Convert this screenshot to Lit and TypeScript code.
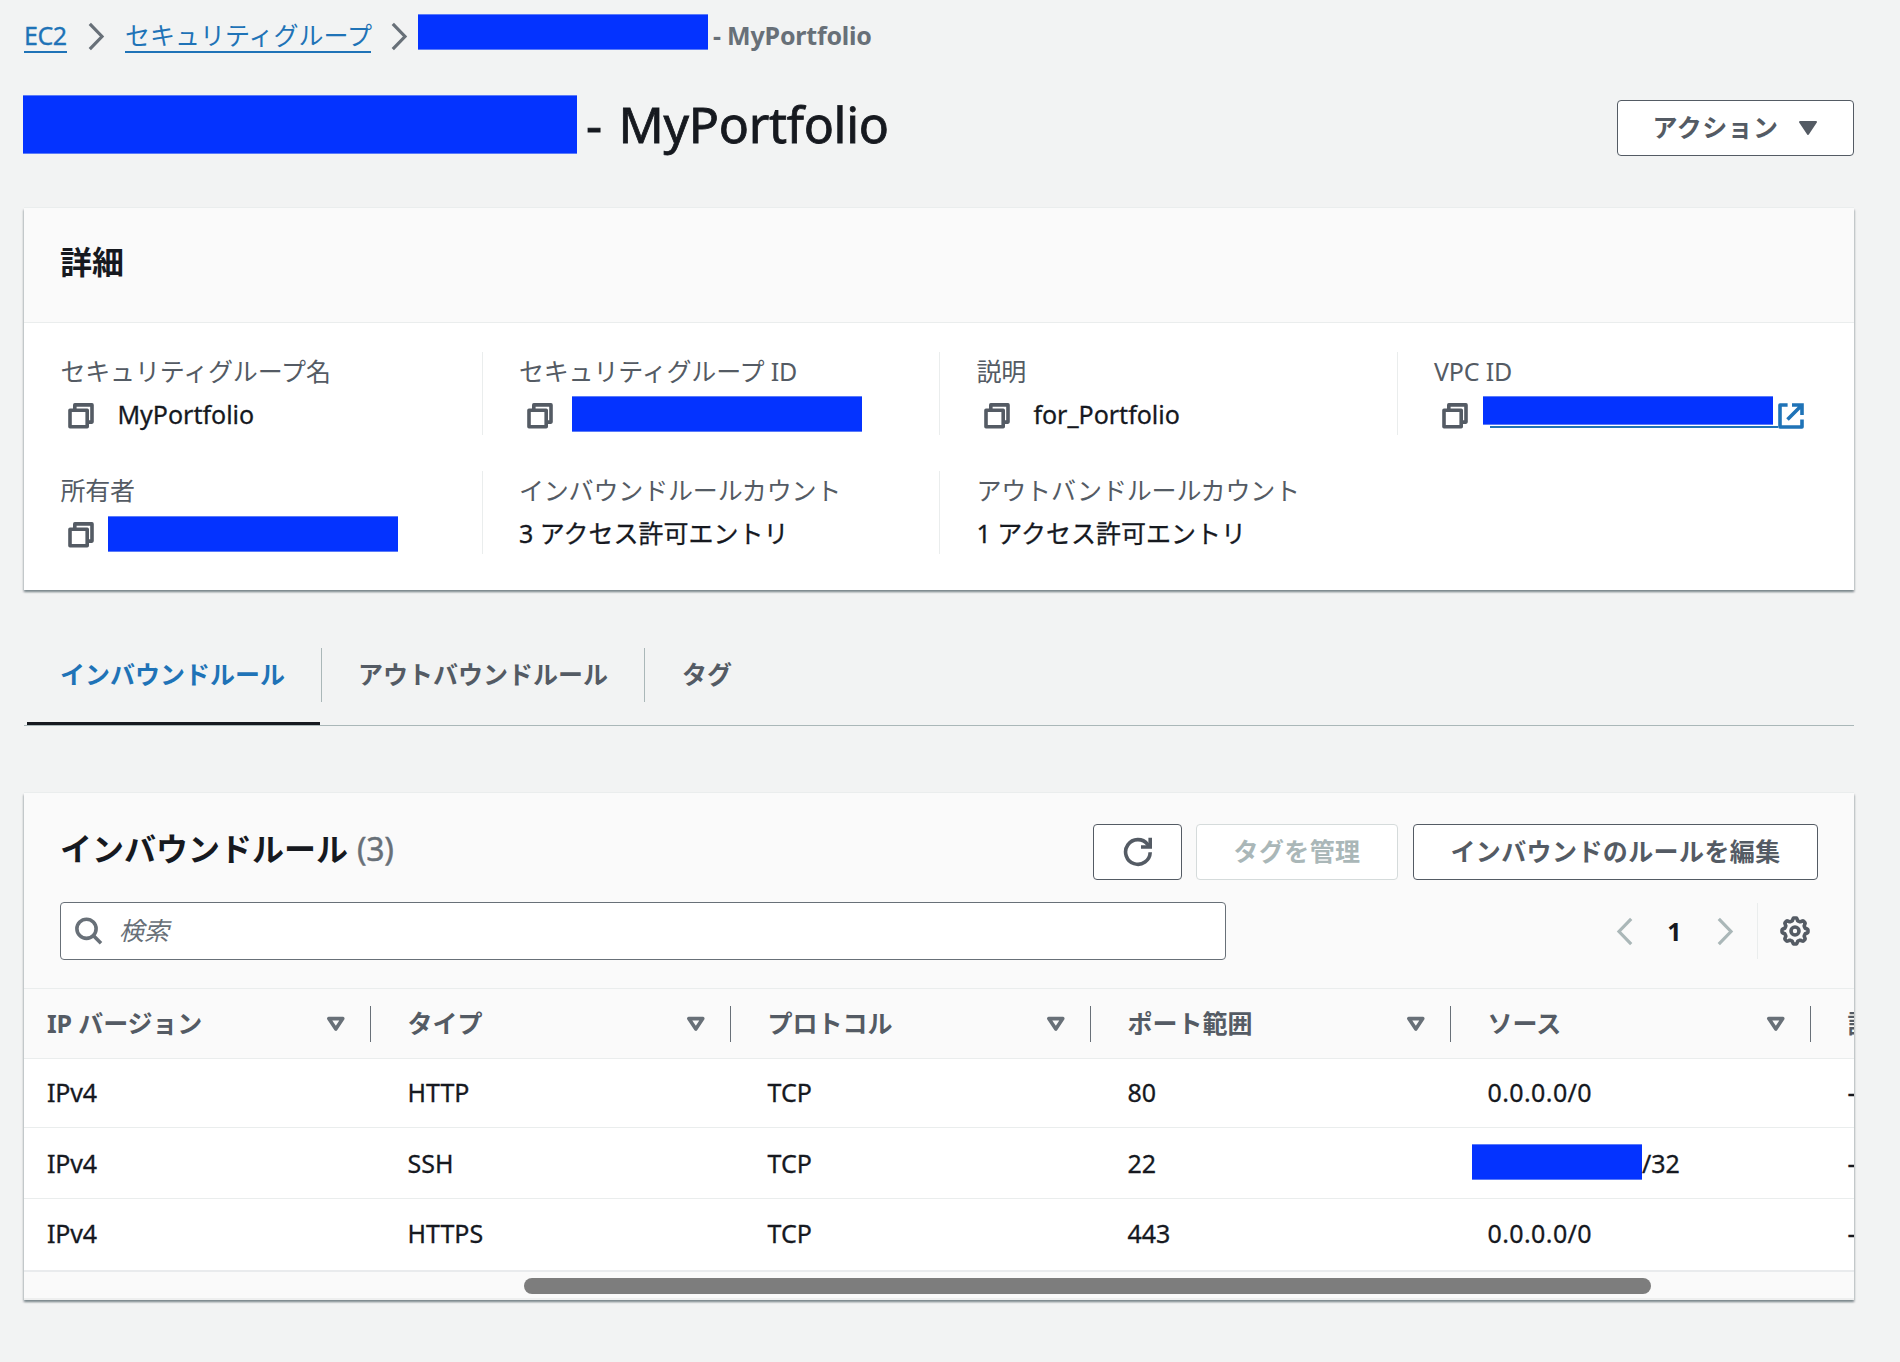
import { LitElement, html, css, svg, nothing, TemplateResult } from "lit";
import { customElement } from "lit/decorators.js";

const copyIcon = html`<svg class="copy" width="26" height="26" viewBox="0 0 26 26" fill="none" stroke="#545b64" stroke-width="3.6" stroke-linejoin="round">
  <path d="M6.8 6V1.9H24v17.2h-4.6" /><path d="M2 7.2h17.2v16.6H2z" />
</svg>`;

const externalIcon = html`<svg class="external" width="26" height="26" viewBox="0 0 26 26" fill="none" stroke="#1f73b7" stroke-width="3.6">
  <path d="M9.6 2H2v22h22v-7.6" stroke-linejoin="round" /><path d="M14 2h10v10M23.5 2.5L9.5 16.5" />
</svg>`;

const chevron = (dir: "left" | "right", color: string, cls: string) => html`<svg class=${cls} width="17" height="29" viewBox="0 0 17 29" fill="none" stroke=${color} stroke-width="3.2">
  ${dir === "right" ? svg`<path d="M1.8 1.8L14 14.5L1.8 27.2" />` : svg`<path d="M15.2 1.8L3 14.5L15.2 27.2" />`}
</svg>`;

const sortIcon = html`<svg class="sort" width="20" height="17" viewBox="0 0 20 17" fill="none" stroke="#687078" stroke-width="3.6" stroke-linejoin="round">
  <path d="M2.8 2.6h14L9.8 13z" />
</svg>`;

const gearPath = (() => {
  const steps = 96;
  let d = "";
  for (let i = 0; i < steps; i++) {
    const a = (i / steps) * Math.PI * 2;
    const wave = Math.max(-1, Math.min(1, 1.7 * Math.cos(a * 8)));
    const r = 11.7 + 1.3 * wave;
    d += `${i ? "L" : "M"}${(15 + r * Math.sin(a)).toFixed(2)} ${(15 - r * Math.cos(a)).toFixed(2)}`;
  }
  return d + "Z";
})();

interface Field {
  label: string;
  text?: string;
  copy?: boolean;
  mask?: string;
  link?: boolean;
}

const fields: Field[] = [
  { label: "セキュリティグループ名", text: "MyPortfolio", copy: true },
  { label: "セキュリティグループ ID", copy: true, mask: "mask-id" },
  { label: "説明", text: "for_Portfolio", copy: true },
  { label: "VPC ID", copy: true, link: true },
  { label: "所有者", copy: true, mask: "mask-owner" },
  { label: "インバウンドルールカウント", text: "3 アクセス許可エントリ" },
  { label: "アウトバンドルールカウント", text: "1 アクセス許可エントリ" },
];

const columns = ["IP バージョン", "タイプ", "プロトコル", "ポート範囲", "ソース", "説明"];

const masked = html`<span class="mask mask-ip"></span><span>/32</span>`;
const anyIp = html`<span class="ip">0.0.0.0/0</span>`;
const rows: (string | TemplateResult)[][] = [
  ["IPv4", "HTTP", "TCP", "80", anyIp, "–"],
  ["IPv4", "SSH", "TCP", "22", masked, "–"],
  ["IPv4", "HTTPS", "TCP", "443", anyIp, "–"],
];

@customElement("app-root")
export class AppRoot extends LitElement {
  static styles = css`
    :host {
      display: block;
      box-sizing: border-box;
      width: 1900px;
      height: 1362px;
      padding: 0 46px 0 24px;
      overflow: hidden;
      background: #f2f3f3;
      color: #16191f;
      font-family: "Noto Sans", "Noto Sans CJK JP", sans-serif;
      font-size: 25px;
      line-height: 40px;
    }
    * { box-sizing: border-box; }
    svg { display: block; flex: none; }
    .mask {
      display: block;
      flex: none;
      background: #0433ff;
      border: 1px solid #5b7bf8;
      border-width: 1px 0;
    }
    .crumbs { display: flex; align-items: flex-start; height: 95px; }
    .crumb {
      margin-top: 15px;
      height: 38px;
      border-bottom: 2px solid #1f73b7;
      color: #1f73b7;
      white-space: nowrap;
    }
    .crumb.first { width: 43px; letter-spacing: -0.5px; -webkit-text-stroke: 0.3px currentColor; }
    .crumb.second { width: 246px; }
    .sep { margin: 22px 20px 0 21px; }
    .sep.last { margin: 22px 10px 0 20px; }
    .mask-crumb { width: 290px; height: 36px; margin-top: 14px; }
    .current { margin: 15px 0 0 5px; color: #687078; font-weight: 700; white-space: nowrap; letter-spacing: -0.2px; }
    .heading { display: flex; align-items: flex-start; height: 113px; margin-left: -1px; }
    .mask-title { width: 554px; height: 59px; }
    h1, h2 { margin: 0; }
    h1 { margin: -1px 0 0 9px; font-size: 50px; line-height: 60px; font-weight: 400; white-space: nowrap; letter-spacing: -0.3px; word-spacing: 4px; -webkit-text-stroke: 0.8px currentColor; }
    .button {
      display: flex;
      align-items: center;
      justify-content: center;
      flex: none;
      height: 56px;
      padding-bottom: 2px;
      border: 1px solid #545b64;
      border-radius: 4px;
      background: #fff;
      color: #545b64;
      font-weight: 700;
      white-space: nowrap;
      letter-spacing: 0.4px;
    }
    .button.disabled { border-color: #d5dbdb; color: #aab7b8; }
    .button.icon { padding: 0; }
    .actions { width: 237px; margin: 5px 0 0 auto; gap: 20px; }
    .actions svg { margin-top: 1px; }
    .card {
      background: #fff;
      box-shadow: 0 -1px 0 #eaeded, 0 2px 2px rgba(0, 28, 36, 0.3), 1px 2px 2px rgba(0, 28, 36, 0.15), -1px 2px 2px rgba(0, 28, 36, 0.15);
    }
    .details { height: 382px; }
    .details-head { height: 115px; padding: 31px 36px; background: #fafafa; border-bottom: 1px solid #eaeded; }
    h2 { font-size: 32px; line-height: 46px; font-weight: 700; white-space: nowrap; }
    .fields { display: grid; grid-template-columns: repeat(4, 457.5px); grid-auto-rows: 83px; row-gap: 36px; padding-top: 29px; }
    .field { padding-left: 36.4px; border-left: 1px solid #eaeded; white-space: nowrap; }
    .field.first { border-left: none; }
    .label { height: 43px; margin-top: -1px; color: #545b64; letter-spacing: -0.15px; }
    .value { display: flex; height: 40px; }
    .text { -webkit-text-stroke: 0.3px currentColor; }
    .copy { margin: 9px 23px 0 8px; }
    .mask-id { width: 290px; height: 36px; margin-left: -4px; margin-top: 2px; }
    .mask-owner { width: 290px; height: 36px; margin-left: -9px; margin-top: 3px; }
    .vpc { display: flex; align-items: flex-start; margin-left: -8px; }
    .vpc-link { width: 295px; height: 33px; margin-top: 2px; background: linear-gradient(#1f73b7, #1f73b7) 7px 30px / 288px 2px no-repeat; }
    .mask-vpc { width: 290px; height: 29px; }
    .external { margin-top: 9px; }
    .tabs { display: flex; align-items: flex-start; height: 136px; margin-top: 58px; }
    .tab-strip { display: flex; flex: 1; height: 78px; border-bottom: 1px solid #aab7b8; font-weight: 700; color: #545b64; }
    .tab { height: 54px; padding: 6px 36px 0; border-right: 1px solid #aab7b8; white-space: nowrap; }
    .tab.active { width: 298px; color: #1f73b7; position: relative; }
    .tab.active::after { content: ""; position: absolute; left: 3px; top: 74px; width: 293px; height: 3px; background: #16191f; }
    .tab.middle { width: 323px; }
    .tab.last { border: none; padding-left: 37px; }
    .rules { height: 507px; margin-top: 9px; }
    .rules-head { height: 196px; background: #fafafa; border-bottom: 1px solid #eaeded; padding: 31px 36px 0; }
    .title-row { display: flex; height: 78px; }
    .title-row h2 { flex: 1; margin: 2px 0 0; }
    .count { font-weight: 400; color: #687078; margin-left: 9px; letter-spacing: -0.3px; -webkit-text-stroke: 0.4px currentColor; }
    .refresh { width: 89px; margin-right: 14px; }
    .manage { width: 202px; margin-right: 15px; }
    .edit { width: 405px; }
    .tools { display: flex; align-items: flex-start; }
    .search { display: flex; align-items: center; width: 1166px; height: 58px; padding-left: 14px; border: 1px solid #687078; border-radius: 4px; background: #fff; color: #687078; font-style: italic; }
    .placeholder { margin: -2px 0 0 16px; }
    .prev { margin: 15px 0 0 390px; }
    .next { margin-top: 15px; margin-left: 1px; }
    .page { width: 83px; margin-top: 9px; text-align: center; font-weight: 700; }
    .prefs { margin-left: 23px; padding: 13px 0 0 22px; height: 56px; margin-top: 1px; border-left: 1px solid #eaeded; }
    .table { overflow: hidden; height: 283px; border-bottom: 2px solid #e9ebed; }
    .row { display: grid; grid-template-columns: 347px repeat(5, 360px); height: 71px; border-bottom: 1px solid #eaeded; }
    .row.top { height: 69px; }
    .row:last-child { border: none; }
    .row.header { height: 70px; background: #fafafa; color: #545b64; font-weight: 700; padding-top: 17px; }
    .cell { display: flex; padding: 14px 0 0 36.5px; white-space: nowrap; -webkit-text-stroke: 0.3px currentColor; }
    .row.top .cell { padding-top: 13px; }
    .row.mid .cell { padding-top: 15px; }
    .cell:first-child { padding-left: 23px; letter-spacing: -0.15px; }
    .ip { letter-spacing: 0.4px; }
    .header .cell { height: 36px; padding-top: 0; padding-right: 24px; justify-content: space-between; line-height: 34px; border-right: 1px solid #687078; -webkit-text-stroke: 0; }
    .sort { margin-top: 10px; }
    .mask-ip { width: 170px; height: 36px; margin: 1px 0 0 -15.5px; }
    .track { height: 28px; background: #fafafa; padding: 6px 0 0 500px; border-bottom: 2px solid #eeefef; }
    .thumb { width: 1127px; height: 16px; border-radius: 8px; background: #7d7d7d; }
  `;

  private renderField(f: Field, i: number) {
    return html`<div class="field ${i % 4 === 0 ? "first" : ""}">
      <div class="label">${f.label}</div>
      <div class="value">
        ${f.copy ? copyIcon : nothing}
        ${f.mask ? html`<span class="mask ${f.mask}"></span>` : nothing}
        ${f.link ? html`<div class="vpc"><div class="vpc-link"><span class="mask mask-vpc"></span></div>${externalIcon}</div>` : nothing}
        ${f.text ? html`<span class="text">${f.text}</span>` : nothing}
      </div>
    </div>`;
  }

  render() {
    return html`
      <nav class="crumbs">
        <a class="crumb first">EC2</a>
        ${chevron("right", "#687078", "sep")}
        <a class="crumb second">セキュリティグループ</a>
        ${chevron("right", "#687078", "sep last")}
        <span class="mask mask-crumb"></span>
        <span class="current">- MyPortfolio</span>
      </nav>
      <header class="heading">
        <span class="mask mask-title"></span>
        <h1>- MyPortfolio</h1>
        <div class="button actions">
          <span>アクション</span>
          <svg width="20" height="16" viewBox="0 0 20 16" fill="#545b64" stroke="#545b64" stroke-width="2" stroke-linejoin="round"><path d="M2 2h16L10 14z" /></svg>
        </div>
      </header>
      <section class="card details">
        <div class="details-head"><h2>詳細</h2></div>
        <div class="fields">${fields.map((f, i) => this.renderField(f, i))}</div>
      </section>
      <div class="tabs">
        <div class="tab-strip">
          <div class="tab active">インバウンドルール</div>
          <div class="tab middle">アウトバウンドルール</div>
          <div class="tab last">タグ</div>
        </div>
      </div>
      <section class="card rules">
        <div class="rules-head">
          <div class="title-row">
            <h2>インバウンドルール<span class="count">(3)</span></h2>
            <div class="button icon refresh">
              <svg width="30" height="30" viewBox="0 0 30 30" fill="none" stroke="#545b64" stroke-width="3.6"><path d="M27.2 15.3A12.3 12.3 0 1 1 24.6 7.4L26 9.2" /><path d="M27.2 0.8V10H18" /></svg>
            </div>
            <div class="button manage disabled">タグを管理</div>
            <div class="button edit">インバウンドのルールを編集</div>
          </div>
          <div class="tools">
            <div class="search">
              <svg width="28" height="28" viewBox="0 0 28 28" fill="none" stroke="#687078" stroke-width="3.6"><circle cx="11.5" cy="11.8" r="9.6" /><path d="M18.3 18.6L26 26.3" /></svg>
              <span class="placeholder">検索</span>
            </div>
            ${chevron("left", "#aab7b8", "prev")}
            <span class="page">1</span>
            ${chevron("right", "#aab7b8", "next")}
            <div class="prefs">
              <svg width="30" height="30" viewBox="0 0 30 30" fill="none" stroke="#545b64" stroke-width="3.6" stroke-linejoin="round"><path d=${gearPath} /><circle cx="15" cy="15" r="4" /></svg>
            </div>
          </div>
        </div>
        <div class="table">
          <div class="row header">
            ${columns.map((c) => html`<div class="cell"><span>${c}</span>${sortIcon}</div>`)}
          </div>
          ${rows.map((r, i) => html`<div class="row ${["top", "mid", ""][i]}">${r.map((c) => html`<div class="cell">${c}</div>`)}</div>`)}
        </div>
        <div class="track"><div class="thumb"></div></div>
      </section>
    `;
  }
}
